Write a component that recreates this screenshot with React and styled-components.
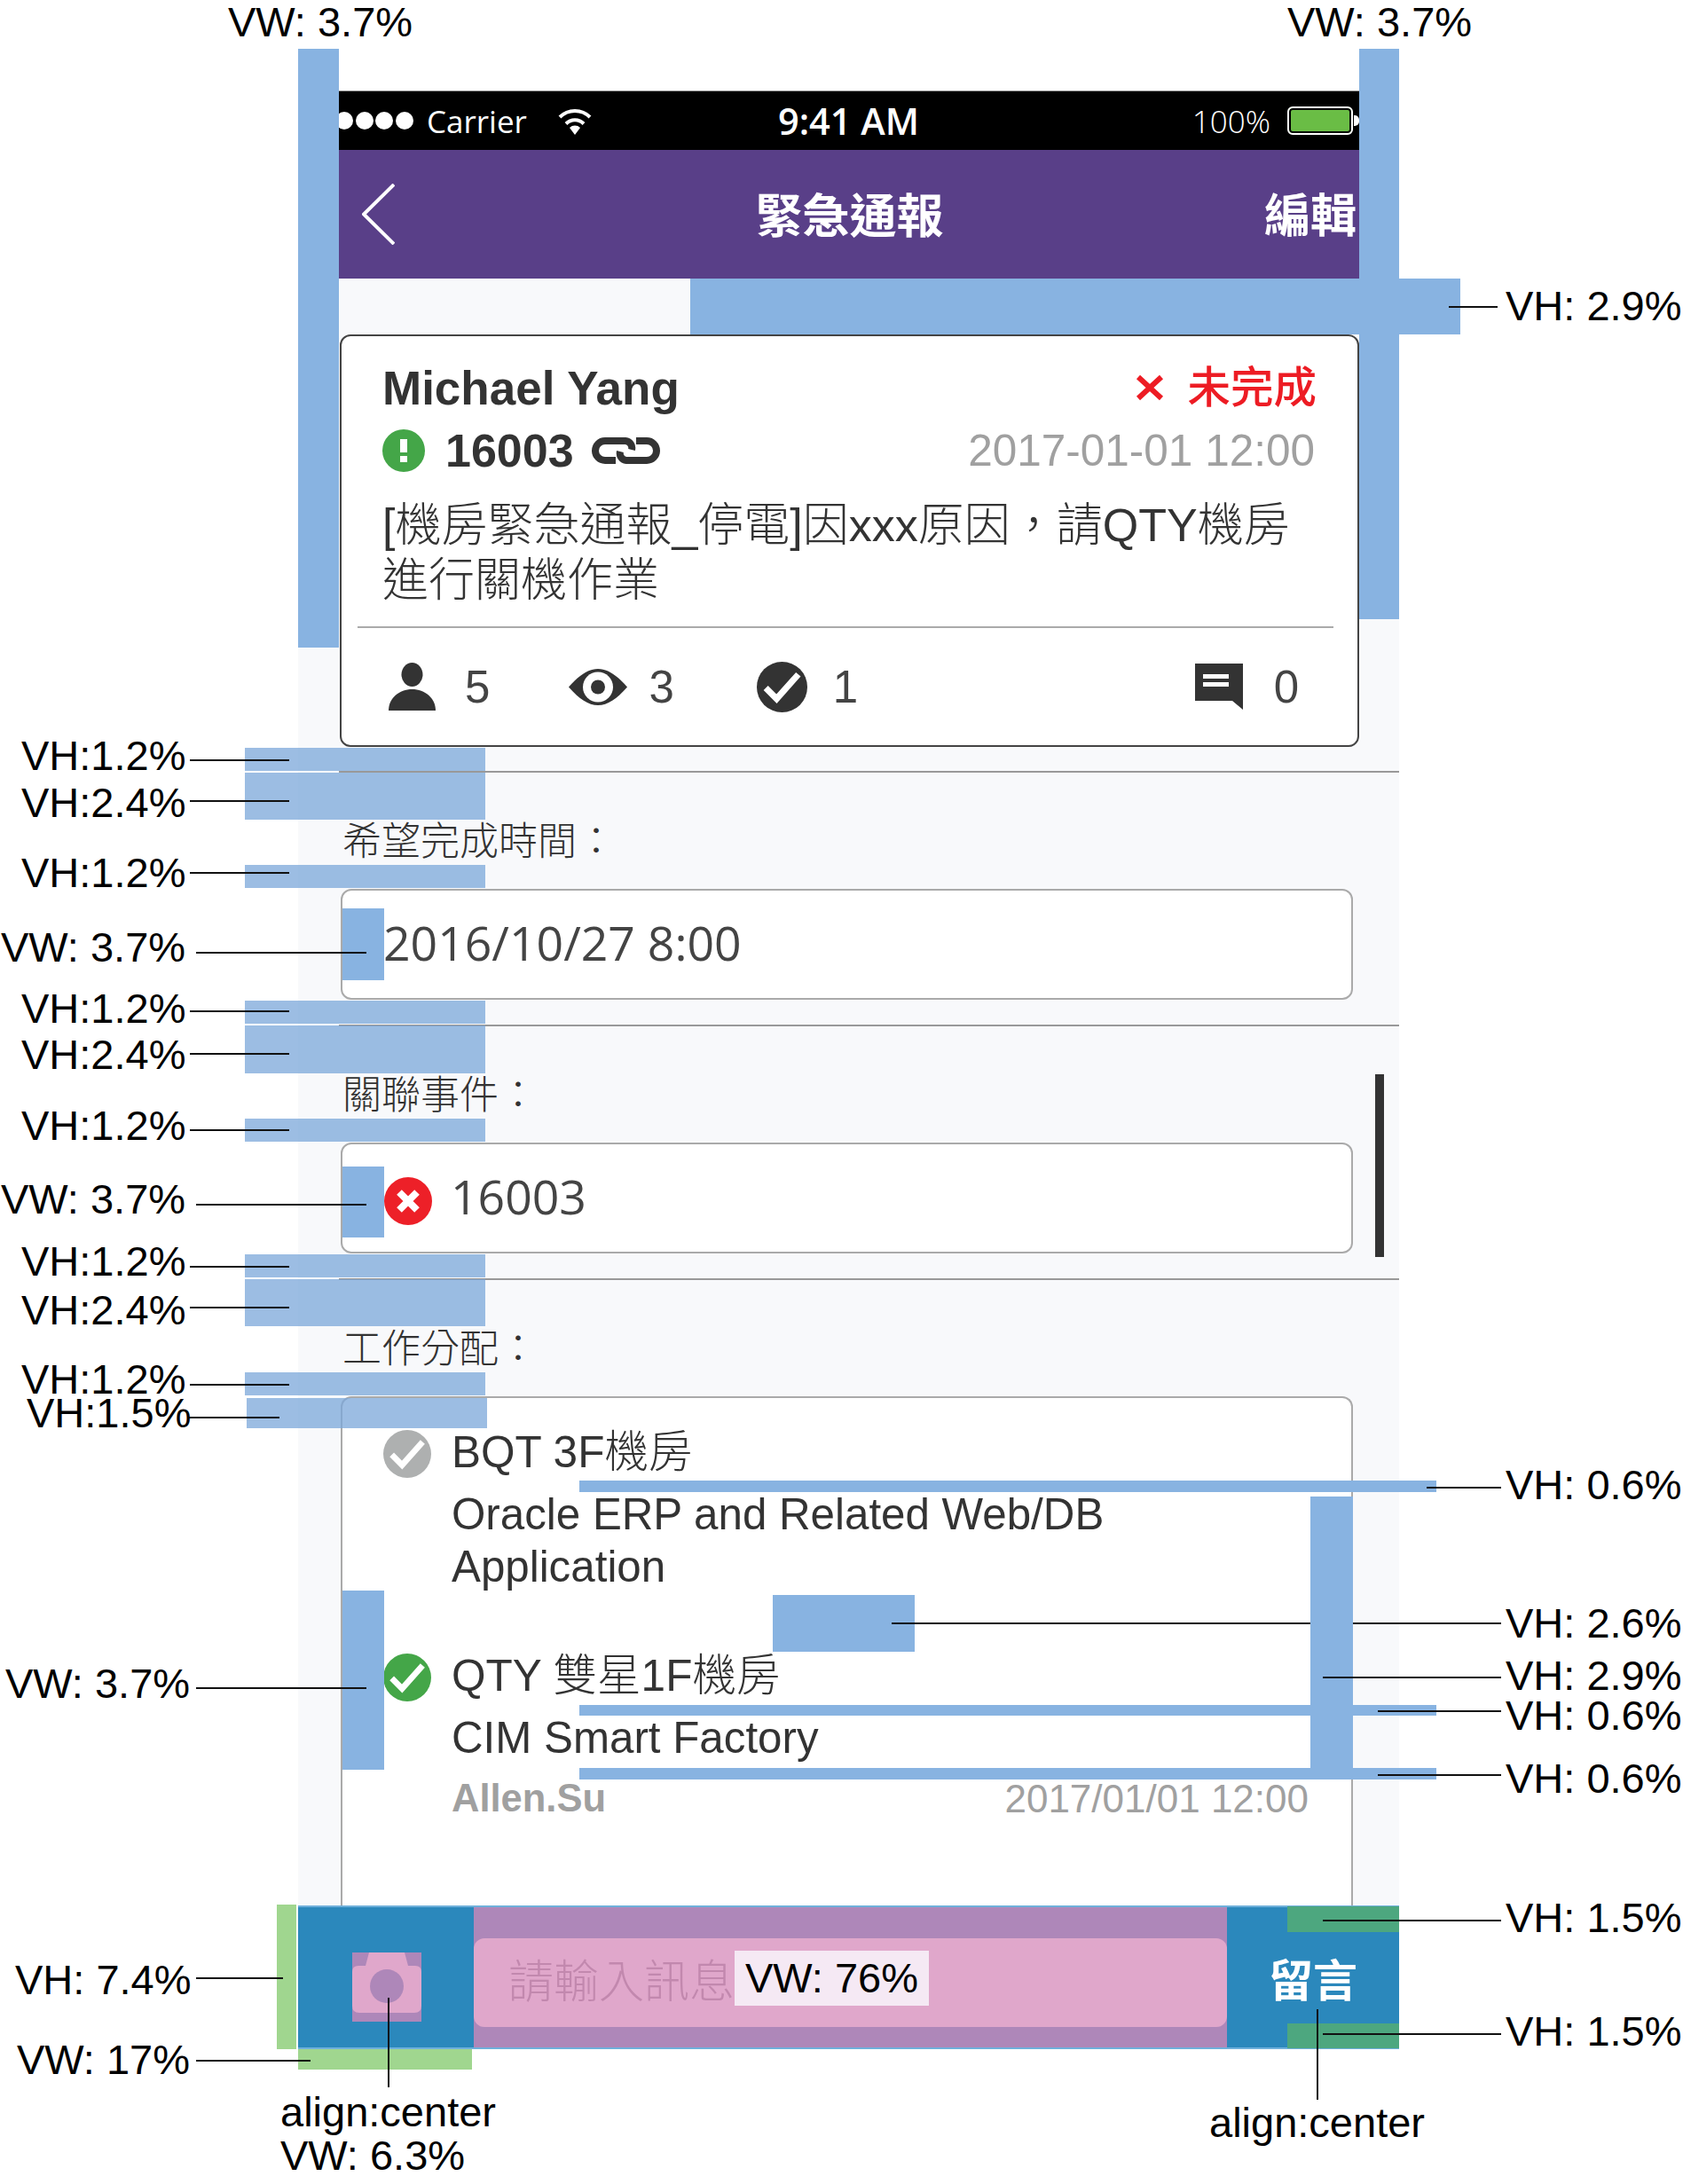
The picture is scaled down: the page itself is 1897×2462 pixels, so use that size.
import React from "react";
import styled, { createGlobalStyle } from "styled-components";

const ARIAL = `"Liberation Sans", "Noto Sans CJK TC", sans-serif`;
const OPEN = `"Open Sans", "Noto Sans CJK TC", sans-serif`;

// annotation overlays, in page coordinates
const blueBars = [
  [336, 55, 46, 675],
  [1532, 55, 45, 643],
  [778, 314, 868, 63],
  [386, 1024, 47, 81],
  [386, 1315, 47, 80],
  [653, 1669, 966, 13],
  [1477, 1687, 48, 319],
  [871, 1798, 160, 64],
  [386, 1793, 47, 202],
  [653, 1922, 966, 12],
  [653, 1993, 966, 13],
];

const tintBars = [
  [843, 26], [871, 53], [975, 26],
  [1128, 26], [1156, 54], [1261, 26],
  [1414, 26], [1442, 53], [1547, 26],
];

const lines = [
  [1633, 345, 55], [214, 856, 112], [214, 902, 112], [214, 983, 112],
  [221, 1073, 192], [214, 1139, 112], [214, 1187, 112], [214, 1273, 112],
  [221, 1357, 192], [214, 1427, 112], [214, 1473, 112], [214, 1560, 112],
  [212, 1597, 103], [221, 1902, 192], [1608, 1676, 84], [1005, 1829, 472],
  [1525, 1829, 167], [1491, 1890, 201], [1553, 1928, 139], [1553, 2000, 139],
  [221, 2229, 98], [221, 2322, 129], [1491, 2164, 201], [1491, 2292, 201],
];

const labels = [
  [257, 8, "VW: 3.7%"], [1451, 8, "VW: 3.7%"], [1697, 328, "VH: 2.9%"],
  [24, 835, "VH:1.2%"], [24, 888, "VH:2.4%"], [24, 967, "VH:1.2%"],
  [1, 1051, "VW: 3.7%"], [24, 1120, "VH:1.2%"], [24, 1172, "VH:2.4%"],
  [24, 1252, "VH:1.2%"], [1, 1335, "VW: 3.7%"], [24, 1405, "VH:1.2%"],
  [24, 1460, "VH:2.4%"], [24, 1538, "VH:1.2%"], [30, 1576, "VH:1.5%"],
  [6, 1881, "VW: 3.7%"], [1697, 1657, "VH: 0.6%"], [1697, 1813, "VH: 2.6%"],
  [1697, 1872, "VH: 2.9%"], [1697, 1917, "VH: 0.6%"], [1697, 1988, "VH: 0.6%"],
  [17, 2215, "VH: 7.4%"], [19, 2305, "VW: 17%"], [1697, 2145, "VH: 1.5%"],
  [1697, 2273, "VH: 1.5%"], [316, 2364, "align:center"], [316, 2413, "VW: 6.3%"],
  [1363, 2376, "align:center"],
];

const GlobalStyle = createGlobalStyle`
  html, body {
    margin: 0;
    padding: 0;
    background: #fff;
  }
`;

const Canvas = styled.div`
  position: relative;
  width: 1897px;
  height: 2462px;
  padding-top: 103px;
  box-sizing: border-box;
  overflow: hidden;
  font-family: ${ARIAL};
`;

const Phone = styled.div`
  position: relative;
  width: 1241px;
  height: 2207px;
  margin-left: 336px;
  display: flex;
  flex-direction: column;
  background: #f8f9fb;
`;

const StatusBar = styled.div`
  height: 66px;
  flex: none;
  display: flex;
  align-items: center;
  padding-left: 42px;
  background: #000;
  box-shadow: 0 -1px #999;
  color: #fff;
  font-family: ${OPEN};
  font-size: 35px;
`;

const SignalDot = styled.span`
  width: 20px;
  height: 20px;
  margin-right: 2.5px;
  border-radius: 50%;
  background: #fff;
`;

const Carrier = styled.span`
  margin-left: 13px;
  margin-right: 34px;
`;

const Time = styled.span`
  margin-left: 209px;
  font-size: 41.5px;
  font-weight: 600;
`;

const Percent = styled.span`
  margin-left: auto;
  margin-right: 19px;
  font-weight: 300;
  font-size: 35px;
`;

const Battery = styled.span`
  position: relative;
  width: 74px;
  height: 32px;
  margin-right: 52px;
  box-sizing: border-box;
  border: 2px solid #fff;
  border-radius: 6px;
  background: #6abd45;
  box-shadow: inset 0 0 0 2px #000;

  &::after {
    content: "";
    position: absolute;
    left: 73px;
    top: 8px;
    width: 6px;
    height: 12px;
    border-radius: 0 5px 5px 0;
    background: #fff;
  }
`;

const NavBar = styled.div`
  height: 145px;
  flex: none;
  display: grid;
  grid-template-columns: 1fr auto 1fr;
  align-items: center;
  padding: 0 48px;
  background: #593f88;
  color: #fff;
  font-size: 53px;
  font-weight: 700;
`;

const NavBack = styled.div`
  margin-left: 24px;
`;

const NavTitle = styled.div`
  transform: translate(1px, -2px);
`;

const NavAction = styled.div`
  justify-self: end;
  font-size: 52px;
  transform: translateY(-2px);
`;

const Content = styled.div`
  flex: 1;
  min-height: 0;
  display: flex;
  flex-direction: column;
  overflow: hidden;
`;

const Card = styled.div`
  flex: none;
  width: 1149px;
  height: 465px;
  margin: 63px 0 0 47px;
  padding: 27px 46px 0;
  box-sizing: border-box;
  border: 2px solid #444;
  border-radius: 12px;
  background: #fff;
  color: #333;
`;

const CardRow = styled.div`
  display: flex;
  align-items: center;
  height: 62px;
  margin-top: ${(p) => p.$top || 0}px;
`;

const Name = styled.div`
  font-size: 53px;
  font-weight: 700;
`;

const State = styled.div`
  margin-left: auto;
  display: flex;
  align-items: center;
  gap: 26px;
  color: #ed1c24;
  font-size: 48.5px;
  font-weight: 500;
  transform: translateY(-4px);
`;

const TicketNo = styled.div`
  margin: 0 20px 0 23px;
  font-size: 52px;
  font-weight: 700;
`;

const CardDate = styled.div`
  margin-left: auto;
  margin-right: 2px;
  color: #a0a0a0;
  font-size: 49.5px;
  transform: translateY(-1px);
`;

const Message = styled.div`
  margin-top: 22px;
  font-size: 52px;
  line-height: 62px;
  font-weight: 300;
`;

const CardRule = styled.div`
  height: 2px;
  margin: 21px -19px 0 -28px;
  background: #aaa;
`;

const Stats = styled.div`
  height: 132px;
  display: flex;
  align-items: center;
  padding: 0 20px 0 7px;
`;

const Stat = styled.div`
  display: flex;
  align-items: center;
  gap: ${(p) => p.$gap}px;
  margin-right: ${(p) => p.$after || 0}px;
  margin-left: ${(p) => (p.$end ? "auto" : "0")};
  font-size: 51px;
  color: #444;
`;

const Section = styled.div`
  flex: ${(p) => (p.$fill ? "1" : "none")};
  display: flex;
  flex-direction: column;
  min-height: 0;
  margin: ${(p) => p.$top || 0}px 0 0 46px;
  padding: 48px 0 ${(p) => (p.$fill ? 0 : 28)}px 2px;
  border-top: 2px solid #999;
`;

const FieldLabel = styled.div`
  flex: none;
  height: 60px;
  margin-bottom: 23px;
  padding-left: 2px;
  color: #333;
  font-size: 44px;
  line-height: 60px;
  font-weight: 300;
`;

const Field = styled.div`
  flex: none;
  width: 1141px;
  height: 125px;
  box-sizing: border-box;
  display: flex;
  align-items: center;
  gap: 21px;
  padding: 0 0 5px 46px;
  border: 2px solid #aaa;
  border-radius: 12px;
  background: #fff;
  color: #444;
  font-family: ${OPEN};
  font-size: 53.5px;
`;

const FieldIcon = styled.span`
  display: block;
  height: 54px;
  margin: 5px 0 0 1px;
`;

const TaskBox = styled.div`
  flex: 1;
  width: 1141px;
  box-sizing: border-box;
  padding: 31px 48px 0 46px;
  border: 2px solid #aaa;
  border-bottom: 0;
  border-radius: 12px 12px 0 0;
  background: #fff;
  color: #333;
`;

const Task = styled.div`
  display: flex;
  gap: 23px;
  margin-bottom: ${(p) => p.$after || 0}px;
`;

const TaskIcon = styled.div`
  flex: none;
  margin-top: 5px;
  line-height: 0;
`;

const TaskBody = styled.div`
  flex: 1;
`;

const TaskTitle = styled.div`
  font-size: 49.5px;
  line-height: 59px;
  font-weight: 300;
`;

const TaskDesc = styled.div`
  margin-top: 11px;
  font-size: 49.3px;
  line-height: 59px;
`;

const TaskFooter = styled.div`
  display: flex;
  justify-content: space-between;
  height: 51px;
  margin-top: 14px;
  color: #a0a0a0;
  font-size: 44px;
  line-height: 51px;
`;

const TaskAuthor = styled.span`
  font-weight: 700;
  font-size: 43.5px;
`;

const ScrollThumb = styled.div`
  position: absolute;
  left: 1214px;
  top: 1108px;
  width: 10px;
  height: 206px;
  background: #333;
`;

const BottomBar = styled.div`
  flex: none;
  height: 162px;
  box-sizing: border-box;
  display: flex;
  border-top: 2px solid #6fb0db;
  border-bottom: 2px solid #6fb0db;
`;

const CameraSlot = styled.div`
  width: 198px;
  display: flex;
  align-items: center;
  justify-content: center;
  padding: 22px 0 0 2px;
  box-sizing: border-box;
  background: #2b88bc;
`;

const InputSlot = styled.div`
  flex: 1;
  padding-top: 35px;
  background: #ae87b9;
`;

const MessageInput = styled.div`
  height: 100px;
  box-sizing: border-box;
  padding-left: 39px;
  border-radius: 12px;
  background: #e0a7cb;
  color: #c288ae;
  font-size: 51px;
  line-height: 100px;
  font-weight: 300;
`;

const SendSlot = styled.div`
  width: 194px;
  display: flex;
  align-items: center;
  justify-content: center;
  background: #2b88bc;
  color: #fff;
  font-size: 50px;
  font-weight: 700;
`;

// spec overlays
const SpecBlock = styled.div`
  position: absolute;
  left: ${(p) => p.$x}px;
  top: ${(p) => p.$y}px;
  width: ${(p) => p.$w}px;
  height: ${(p) => p.$h}px;
  background: ${(p) => p.$color || "#88b3e1"};
`;

const SpecLine = styled.div`
  position: absolute;
  left: ${(p) => p.$x}px;
  top: ${(p) => p.$y}px;
  width: ${(p) => p.$w}px;
  height: ${(p) => p.$h}px;
  background: #111;
`;

const SpecLabel = styled.div`
  position: absolute;
  left: ${(p) => p.$x}px;
  top: ${(p) => p.$y - 7}px;
  color: #000;
  font-family: ${ARIAL};
  font-size: 47px;
  line-height: 1;
  white-space: nowrap;
`;

const InlineLabel = styled(SpecLabel)`
  top: 2199px;
  width: 219px;
  height: 62px;
  padding-left: 12px;
  box-sizing: border-box;
  background: #f5e9f4;
  line-height: 62px;
`;

const CrossMark = styled.svg`
  margin-top: 7px;
`;

const Wifi = () => (
  <svg width="40" height="31" viewBox="0 0 40 31">
    <path d="M3 11A24 24 0 0 1 37 11M10 18.5A14 14 0 0 1 30 18.5" fill="none" stroke="#fff" strokeWidth="4" />
    <path d="M14 23A8.5 8.5 0 0 1 26 23L20 31Z" fill="#fff" />
  </svg>
);

const Chevron = () => (
  <svg width="37" height="69" viewBox="0 0 37 69" style={{ display: "block" }}>
    <path d="M36 1L2 34.5 36 68" fill="none" stroke="#fff" strokeWidth="4" />
  </svg>
);

const Cross = () => (
  <CrossMark width="32" height="30" viewBox="0 0 32 30">
    <path d="M3 3L29 27M29 3L3 27" fill="none" stroke="#ed1c24" strokeWidth="6" />
  </CrossMark>
);

const Alert = () => (
  <svg width="48" height="48" viewBox="0 0 48 48">
    <circle cx="24" cy="24" r="24" fill="#44a648" />
    <path d="M20 11H28V26H20ZM20 30H28V37H20Z" fill="#fff" />
  </svg>
);

const LinkIcon = () => (
  <svg width="77" height="30" viewBox="0 0 77 30">
    <path
      d="M27 26H15A11 11 0 0 1 15 4H38A8 8 0 0 1 45 14M50 4H62A11 11 0 0 1 62 26H39A8 8 0 0 1 32 16"
      fill="none"
      stroke="#333"
      strokeWidth="8"
    />
  </svg>
);

const Person = () => (
  <svg width="53" height="54" viewBox="0 0 53 54">
    <ellipse cx="26.5" cy="13.5" rx="12" ry="13.5" fill="#333" />
    <path d="M0 54C0 40 12 30 26.5 30S53 40 53 54Z" fill="#333" />
  </svg>
);

const Eye = () => (
  <svg width="66" height="41" viewBox="0 0 66 41">
    <path d="M0 20.5C12 7 22 0 33 0S54 7 66 20.5C54 34 44 41 33 41S12 34 0 20.5Z" fill="#333" />
    <circle cx="33" cy="20.5" r="17" fill="#fff" />
    <circle cx="33" cy="20.5" r="8" fill="#333" />
  </svg>
);

const CheckCircle = ({ size, color }) => (
  <svg width={size} height={size} viewBox="0 0 56 56">
    <circle cx="28" cy="28" r="28" fill={color} />
    <path d="M10 29L22 41 46 14" fill="none" stroke="#fff" strokeWidth="7" />
  </svg>
);

const Comment = () => (
  <svg width="54" height="52" viewBox="0 0 54 52">
    <path d="M0 0H54V52L42 42H0Z" fill="#333" />
    <path d="M9 12H38V17H9ZM9 21H38V26H9Z" fill="#fff" />
  </svg>
);

const ErrorCircle = () => (
  <svg width="54" height="54" viewBox="0 0 54 54">
    <circle cx="27" cy="27" r="27" fill="#ed2028" />
    <path d="M17 17L37 37M37 17L17 37" fill="none" stroke="#fff" strokeWidth="8" />
  </svg>
);

const Camera = () => (
  <svg width="78" height="78" viewBox="0 0 78 78">
    <rect width="78" height="78" fill="#ae87b9" />
    <path
      d="M19 0H59L63 15H71Q78 15 78 22V60Q78 68 70 68H8Q0 68 0 60V22Q0 15 7 15H15Z"
      fill="#e0a7cb"
    />
    <ellipse cx="39" cy="38" rx="19" ry="19" fill="#ae87b9" />
  </svg>
);

const App = () => (
  <Canvas>
    <GlobalStyle />
    <Phone>
      <StatusBar>
        <SignalDot />
        <SignalDot />
        <SignalDot />
        <SignalDot />
        <Carrier>Carrier</Carrier>
        <Wifi />
        <Time>9:41 AM</Time>
        <Percent>100%</Percent>
        <Battery />
      </StatusBar>
      <NavBar>
        <NavBack>
          <Chevron />
        </NavBack>
        <NavTitle>緊急通報</NavTitle>
        <NavAction>編輯</NavAction>
      </NavBar>
      <Content>
        <Card>
          <CardRow>
            <Name>Michael Yang</Name>
            <State>
              <Cross />
              未完成
            </State>
          </CardRow>
          <CardRow $top={9}>
            <Alert />
            <TicketNo>16003</TicketNo>
            <LinkIcon />
            <CardDate>2017-01-01 12:00</CardDate>
          </CardRow>
          <Message>[機房緊急通報_停電]因xxx原因，請QTY機房進行關機作業</Message>
          <CardRule />
          <Stats>
            <Stat $gap={33} $after={89}>
              <Person />5
            </Stat>
            <Stat $gap={24} $after={93}>
              <Eye />3
            </Stat>
            <Stat $gap={29}>
              <CheckCircle size={57} color="#333" />1
            </Stat>
            <Stat $gap={35} $end>
              <Comment />0
            </Stat>
          </Stats>
        </Card>

        <Section $top={27}>
          <FieldLabel>希望完成時間：</FieldLabel>
          <Field>2016/10/27 8:00</Field>
        </Section>
        <Section>
          <FieldLabel>關聯事件：</FieldLabel>
          <Field>
            <FieldIcon>
              <ErrorCircle />
            </FieldIcon>
            16003
          </Field>
        </Section>
        <Section $fill>
          <FieldLabel>工作分配：</FieldLabel>
          <TaskBox>
            <Task $after={64}>
              <TaskIcon>
                <CheckCircle size={54} color="#aeb0b0" />
              </TaskIcon>
              <TaskBody>
                <TaskTitle>BQT 3F機房</TaskTitle>
                <TaskDesc>Oracle ERP and Related Web/DB Application</TaskDesc>
              </TaskBody>
            </Task>
            <Task>
              <TaskIcon>
                <CheckCircle size={54} color="#44a648" />
              </TaskIcon>
              <TaskBody>
                <TaskTitle>QTY 雙星1F機房</TaskTitle>
                <TaskDesc>CIM Smart Factory</TaskDesc>
                <TaskFooter>
                  <TaskAuthor>Allen.Su</TaskAuthor>
                  <span>2017/01/01 12:00</span>
                </TaskFooter>
              </TaskBody>
            </Task>
          </TaskBox>
        </Section>
      </Content>
      <BottomBar>
        <CameraSlot>
          <Camera />
        </CameraSlot>
        <InputSlot>
          <MessageInput>請輸入訊息</MessageInput>
        </InputSlot>
        <SendSlot>留言</SendSlot>
      </BottomBar>
      <ScrollThumb />
    </Phone>

    {blueBars.map(([x, y, w, h]) => (
      <SpecBlock key={`${x}-${y}`} $x={x} $y={y} $w={w} $h={h} />
    ))}
    {tintBars.map(([y, h]) => (
      <SpecBlock key={y} $x={276} $y={y} $w={271} $h={h} $color="rgba(123, 167, 218, 0.75)" />
    ))}
    <SpecBlock $x={278} $y={1576} $w={271} $h={34} $color="rgba(123, 167, 218, 0.75)" />
    <SpecBlock $x={312} $y={2147} $w={22} $h={163} $color="#a0d68f" />
    <SpecBlock $x={336} $y={2310} $w={196} $h={23} $color="#a0d68f" />
    <SpecBlock $x={1451} $y={2149} $w={126} $h={29} $color="#4da77f" />
    <SpecBlock $x={1451} $y={2281} $w={126} $h={28} $color="#4da77f" />

    {lines.map(([x, y, w]) => (
      <SpecLine key={`${x}-${y}`} $x={x} $y={y} $w={w} $h={2} />
    ))}
    <SpecLine $x={437} $y={2252} $w={2} $h={101} />
    <SpecLine $x={1484} $y={2265} $w={2} $h={102} />

    {labels.map(([x, y, text]) => (
      <SpecLabel key={`${x}-${y}`} $x={x} $y={y}>
        {text}
      </SpecLabel>
    ))}
    <InlineLabel $x={828} $y={0}>VW: 76%</InlineLabel>
  </Canvas>
);

export default App;
